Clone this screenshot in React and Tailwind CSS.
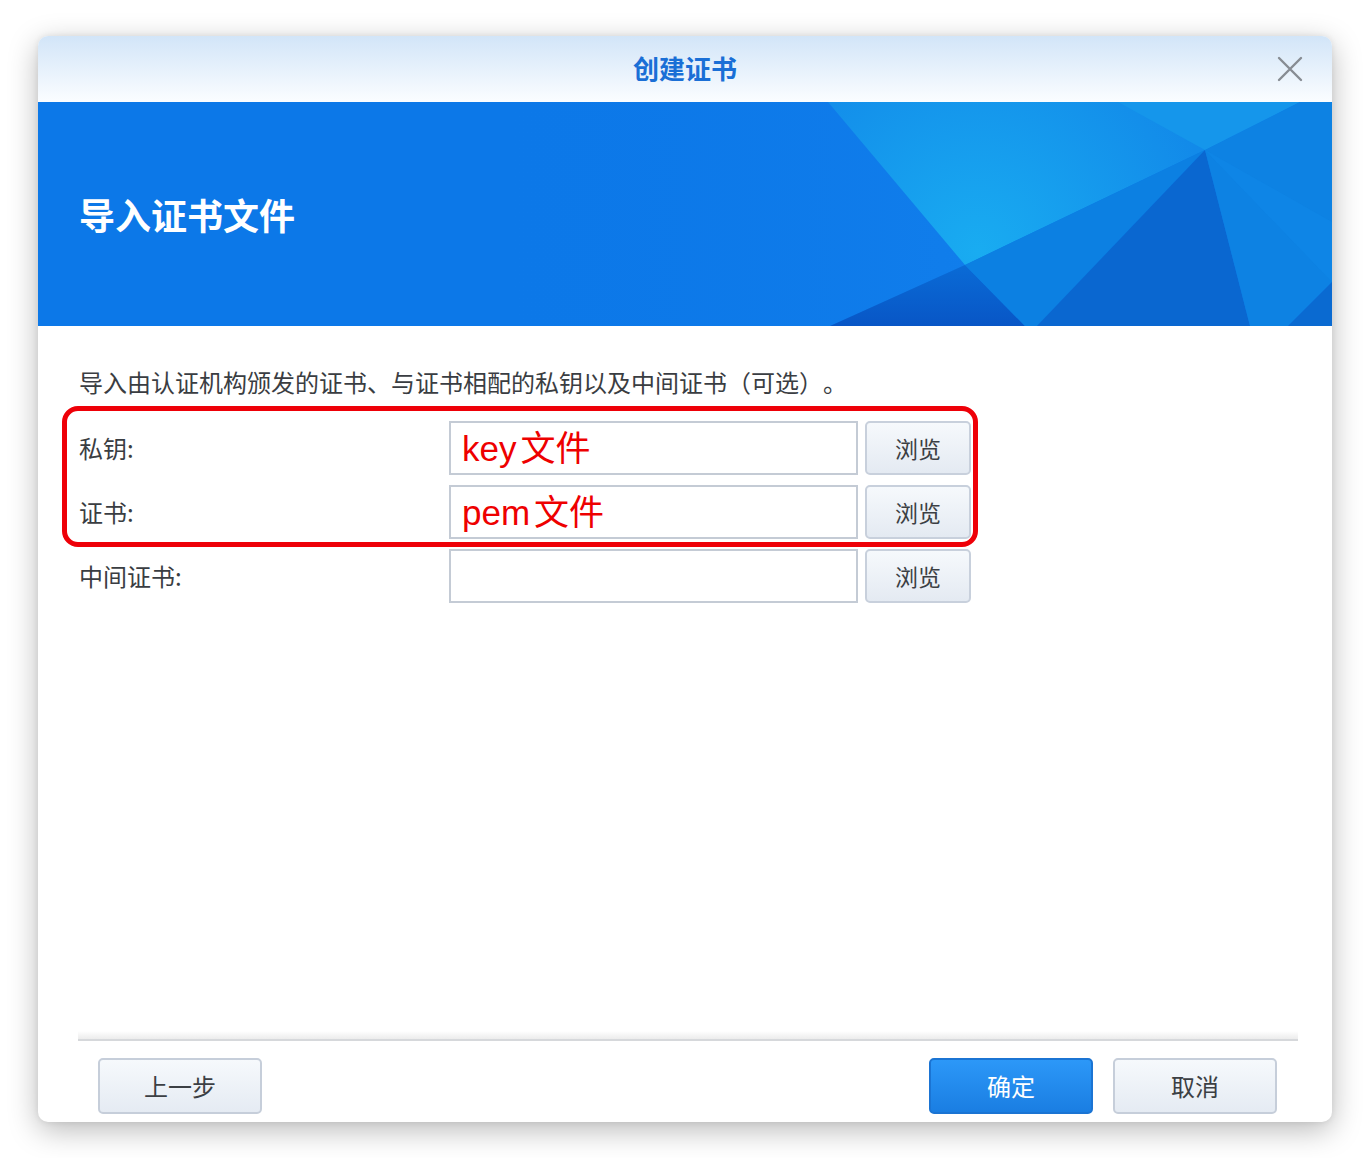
import React from "react";

const CJK = { fontFamily: '"Noto Sans CJK SC", "Noto Sans", sans-serif' };
const MIXED = { fontFamily: '"Liberation Sans", "Noto Sans CJK SC", sans-serif' };

function BannerArt() {
  // faceted background on the right side of the banner
  return (
    <svg
      className="absolute inset-0 h-full w-full"
      viewBox="0 0 1294 224"
      preserveAspectRatio="none"
    >
      <defs>
        <radialGradient id="glow" cx="940" cy="150" r="240" gradientUnits="userSpaceOnUse">
          <stop offset="0" stopColor="#19acf1" />
          <stop offset="1" stopColor="#128ae9" />
        </radialGradient>
        <linearGradient id="leftBand" x1="0" y1="0" x2="1" y2="0">
          <stop offset="0" stopColor="#0d79e9" stopOpacity="0" />
          <stop offset="1" stopColor="#1482ee" stopOpacity="1" />
        </linearGradient>
        <linearGradient id="darkTri" x1="0" y1="0" x2="0" y2="1">
          <stop offset="0" stopColor="#0a6bd6" />
          <stop offset="1" stopColor="#0856c6" />
        </linearGradient>
      </defs>
      <rect width="1294" height="224" fill="#0c78e8" />
      <polygon points="460,0 790,0 927,163 792,224 480,224" fill="url(#leftBand)" opacity="0.55" />
      <polygon points="790,0 1262,0 1167,48 927,163" fill="url(#glow)" />
      <polygon points="1080,0 1262,0 1167,48" fill="#1596eb" />
      <polygon points="792,224 927,163 987,224" fill="url(#darkTri)" />
      <polygon points="927,163 1167,48 999,224 987,224" fill="#0c80e2" />
      <polygon points="1167,48 999,224 1212,224" fill="#0a67d0" />
      <polygon points="1167,48 1262,0 1294,0 1294,180 1250,224 1212,224" fill="#0d82e3" />
      <polygon points="1167,48 1294,120 1294,180" fill="#0f86e6" opacity="0.8" />
      <polygon points="1250,224 1294,180 1294,224" fill="#0a6ad1" />
    </svg>
  );
}

function Browse() {
  return (
    <button
      className="h-[54px] w-[106px] rounded-[5px] border-2 border-[#c8d0dc] bg-gradient-to-b from-[#f6f9fc] to-[#e4eaf2] text-[23px] text-[#3c3f44]"
      style={CJK}
    >
      浏览
    </button>
  );
}

function Row({ label, ext }) {
  return (
    <div className="flex h-[54px] items-center">
      <div className="w-[370px] text-[24px] text-[#3a3d42] [text-spacing-trim:space-all]" style={CJK}>
        {label}
      </div>
      <div
        className="flex h-[54px] w-[409px] items-center border-2 border-[#c4cbd5] bg-white pl-[11px] text-[35px] leading-none text-[#ee0000]"
        style={MIXED}
      >
        {ext && (
          <>
            <span>{ext}</span>
            <span className="ml-[4px]">文件</span>
          </>
        )}
      </div>
      <div className="ml-[7px]">
        <Browse />
      </div>
    </div>
  );
}

function FooterButton({ children, primary }) {
  return (
    <button
      className={
        primary
          ? "h-[56px] w-[164px] rounded-[5px] border-2 border-[#1b74d3] bg-gradient-to-b from-[#2c98f8] to-[#1a7ee2] text-[24px] text-white"
          : "h-[56px] w-[164px] rounded-[5px] border-2 border-[#c6ceda] bg-gradient-to-b from-[#f6f9fc] to-[#e5ebf3] text-[24px] text-[#3c3f44]"
      }
      style={CJK}
    >
      {children}
    </button>
  );
}

export default function App() {
  return (
    <div className="min-h-[1158px] bg-white pl-[38px] pt-[36px]">
      <div className="flex h-[1086px] w-[1294px] flex-col overflow-hidden rounded-[10px] bg-white shadow-[0_8px_30px_rgba(0,0,0,0.28),0_0_6px_rgba(0,0,0,0.08)]">
        {/* title bar */}
        <div className="grid h-[66px] shrink-0 grid-cols-[1fr_auto_1fr] items-center bg-gradient-to-b from-[#d2e5f8] to-[#fbfdff]">
          <div />
          <div className="pb-[4px] text-[26px] font-bold text-[#1a6fd6]" style={CJK}>
            创建证书
          </div>
          <div className="flex justify-end pr-[29px]">
            <svg width="26" height="26" viewBox="0 0 26 26">
              <path d="M2 2 L24 24 M24 2 L2 24" stroke="#878c93" strokeWidth="2.4" strokeLinecap="round" />
            </svg>
          </div>
        </div>

        {/* banner */}
        <div className="relative flex h-[224px] shrink-0 items-center">
          <BannerArt />
          <h1 className="relative pl-[41px] text-[36px] font-bold text-white" style={CJK}>
            导入证书文件
          </h1>
        </div>

        {/* body */}
        <div className="flex flex-1 flex-col pl-[40px] pr-[34px]">
          <p
            className="ml-[1px] mt-[40px] text-[24px] leading-[32px] text-[#3a3d42] [text-spacing-trim:space-all]"
            style={CJK}
          >
            导入由认证机构颁发的证书、与证书相配的私钥以及中间证书（可选）。
          </p>

          <div className="relative ml-[1px] mt-[23px] flex flex-col gap-[10px]">
            <Row label="私钥:" ext="key" />
            <Row label="证书:" ext="pem" />
            <Row label="中间证书:" />
            {/* red annotation frame around the first two rows */}
            <div className="pointer-events-none absolute left-[-17px] top-[-15px] h-[141px] w-[916px] rounded-[16px] border-[5px] border-[#ee0008]" />
          </div>

          <div className="flex-1" />

          {/* footer */}
          <div className="h-[8px] bg-gradient-to-b from-white to-[#ececec]" />
          <div className="h-[2px] bg-[#d6d8db]" />
          <div className="flex items-center justify-between pl-[20px] pr-[21px] pt-[17px] pb-[8px]">
            <FooterButton>上一步</FooterButton>
            <div className="flex gap-[20px]">
              <FooterButton primary>确定</FooterButton>
              <FooterButton>取消</FooterButton>
            </div>
          </div>
        </div>
      </div>
    </div>
  );
}
